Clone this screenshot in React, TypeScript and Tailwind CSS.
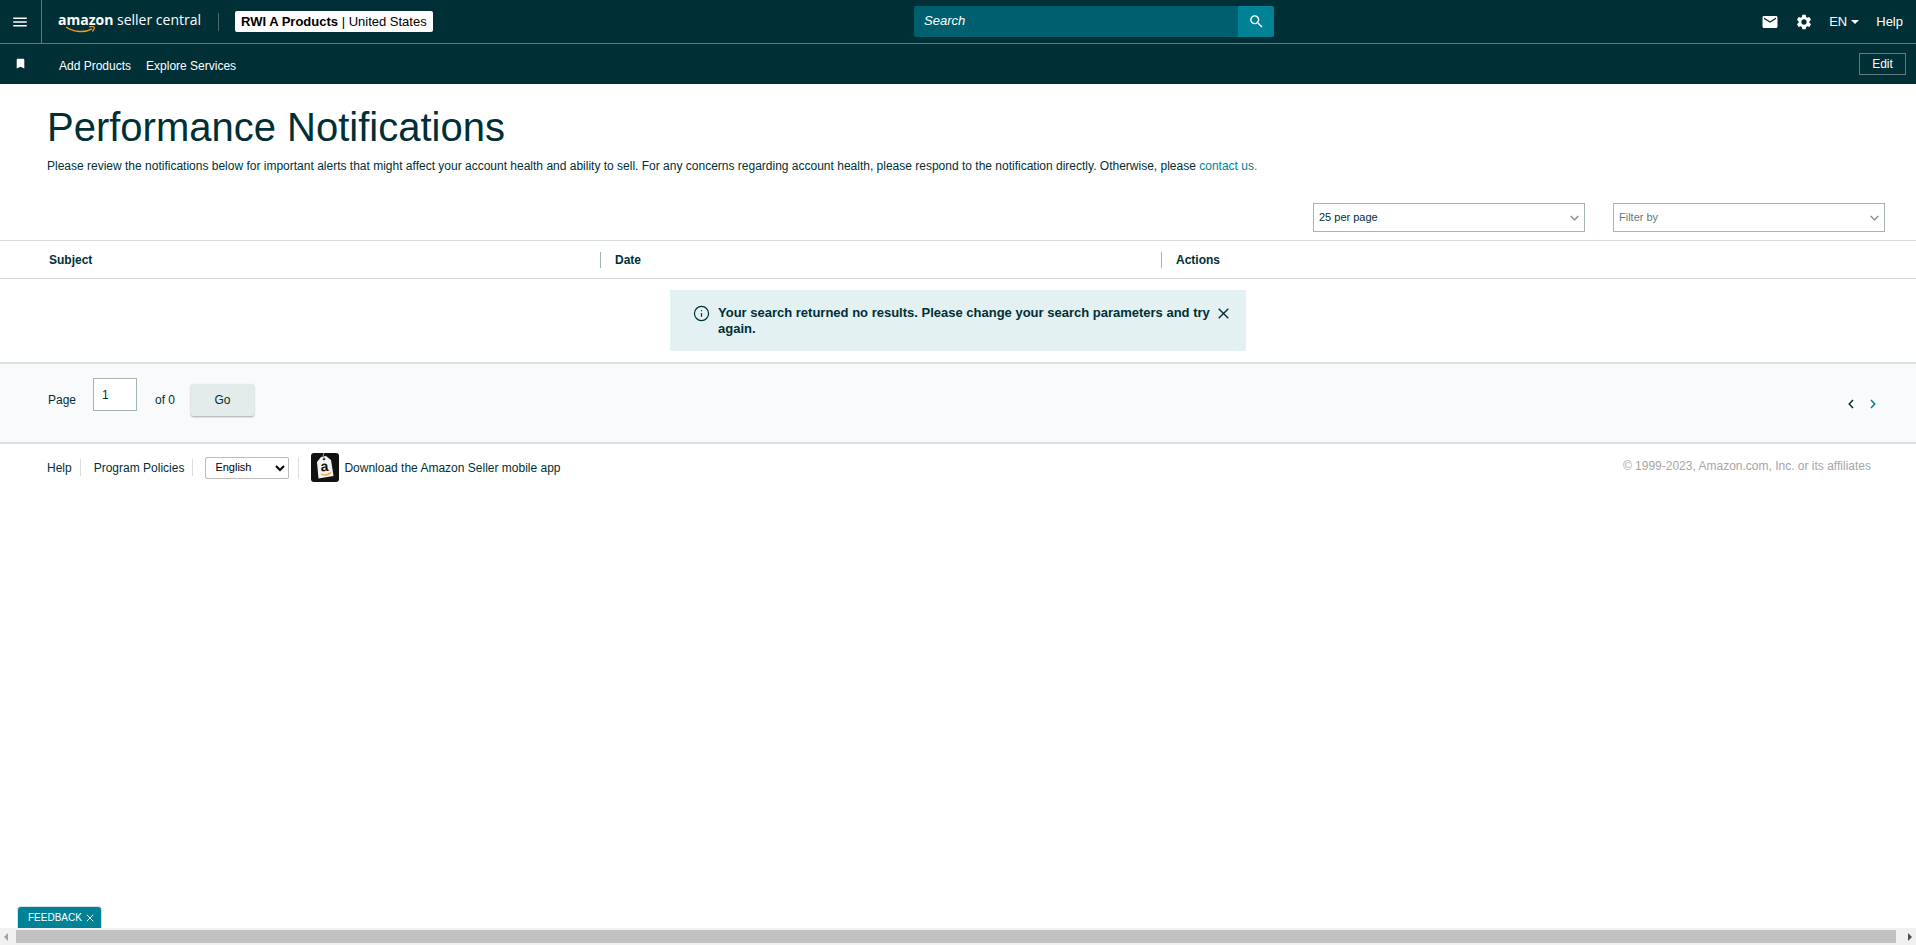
import { Info, X } from "lucide-react";
import { MdBookmark, MdEmail, MdMenu, MdSearch, MdSettings } from "react-icons/md";

function Logo() {
  return (
    <a href="#" className="relative mb-1 ml-4 flex h-6 items-center gap-1 leading-5">
      <span className="w-[55px] font-['Open_Sans',sans-serif] text-[14px] font-bold">amazon</span>
      <span className="w-[84px] font-['Open_Sans',sans-serif] text-[14px] whitespace-nowrap">
        seller central
      </span>
      <svg className="absolute top-[18px] left-2" width="30" height="8" viewBox="0 0 30 8" fill="none">
        <path d="M0 1C8 6.5 19 6.8 26 2.8" stroke="#f79a2b" strokeWidth="1.4" />
        <path d="M23 1c2.5-.7 4.5-.5 5 .1s0 2.6-1.6 4.4" stroke="#f79a2b" strokeWidth="1.2" />
      </svg>
    </a>
  );
}

function TopBar() {
  return (
    <div className="flex h-11 items-center border-b border-[#62787c] text-[13px] text-white">
      <button aria-label="Menu" className="flex h-full w-[42px] items-center justify-center border-r border-[#62787c] pr-0.5">
        <MdMenu size={18} />
      </button>
      <div className="flex flex-1 items-center">
        <Logo />
        <span className="ml-[17px] h-[18px] w-px bg-[#4d6a6f]" />
        <button className="ml-4 h-[21px] rounded-xs bg-white px-1.5 whitespace-nowrap text-black">
          <b>RWI A Products</b> | United States
        </button>
      </div>
      <form className="mb-px flex h-[31px] w-[360px]">
        <input
          aria-label="Search"
          placeholder="Search"
          className="min-w-0 flex-1 rounded-l-xs bg-[#005f6e] px-2.5 italic placeholder:text-white"
        />
        <button type="button" aria-label="Submit search" className="flex w-9 items-center justify-center rounded-r-xs bg-[#008296]">
          <MdSearch size={17} />
        </button>
      </form>
      <div className="flex w-[642px] items-center justify-end pr-[13px]">
        <button aria-label="Mail">
          <MdEmail size={18} />
        </button>
        <button aria-label="Settings" className="ml-4">
          <MdSettings size={18} />
        </button>
        <button className="ml-4 flex items-center gap-1">
          EN
          <span className="mt-px border-x-4 border-t-4 border-x-transparent border-t-white" />
        </button>
        <a href="#" className="ml-[17px]">
          Help
        </a>
      </div>
    </div>
  );
}

function QuickLinks() {
  return (
    <div className="flex h-10 items-center pt-0.5 pr-2.5 pl-3.5 text-xs text-white">
      <button aria-label="Bookmarks" className="mb-1">
        <MdBookmark size={13} />
      </button>
      <nav className="ml-8 flex flex-1 gap-[15px] pt-0.5">
        <a href="#">Add Products</a>
        <a href="#">Explore Services</a>
      </nav>
      <button className="mb-0.5 h-[22px] w-[47px] border border-[#62787c]">Edit</button>
    </div>
  );
}

function Dropdown({ label, muted }: { label: string; muted?: boolean }) {
  return (
    <div className="relative w-[272px]">
      <select
        aria-label={label}
        className={`h-[29px] w-full appearance-none border border-[#a3b4b4] bg-white px-[5px] text-[11px] ${
          muted ? "text-[#6c7778]" : "text-[#002f36]"
        }`}
      >
        <option>{label}</option>
      </select>
      <svg className="pointer-events-none absolute top-3 right-1.5" width="9" height="7" viewBox="0 0 9 7" fill="none">
        <path d="M.7 1l3.8 4L8.3 1" stroke="#879596" strokeWidth="1.5" />
      </svg>
    </div>
  );
}

function Alert() {
  return (
    <div role="status" className="mx-auto flex h-[61px] w-[576px] bg-[#e3f1f2] pt-[15px] pr-[17px] pl-[23px] text-[13px] leading-4 font-bold">
      <Info size={17} strokeWidth={1.7} className="shrink-0" />
      <p className="ml-2 flex-1">
        Your search returned no results. Please change your search parameters and try again.
      </p>
      <button aria-label="Dismiss" className="h-4">
        <svg width="11" height="11" viewBox="0 0 11 11" fill="none">
          <path d="M.7.7l9.6 9.6M10.3.7L.7 10.3" stroke="#002f36" strokeWidth="1.4" />
        </svg>
      </button>
    </div>
  );
}

function Pager() {
  return (
    <div className="flex h-[82px] items-start border-y-2 border-[#dce1e3] bg-[#f9fafc] pr-10 pl-12 text-xs">
      <label htmlFor="page" className="mt-7 w-[45px]">
        Page
      </label>
      <input
        id="page"
        defaultValue="1"
        className="mt-3.5 h-[33px] w-11 border border-[#a3b4b4] bg-white px-2"
      />
      <span className="mt-7 ml-[18px] w-9">of 0</span>
      <button className="mt-5 h-8 w-[63px] rounded-xs bg-[#e3ebeb] shadow-[0_1px_2px_#00000055]">Go</button>
      <div className="mt-[35px] ml-auto flex gap-4">
        <button aria-label="Previous page">
          <svg width="6" height="10" viewBox="0 0 6 10" fill="none">
            <path d="M5 1L1.2 5L5 9" stroke="#002f36" strokeWidth="1.5" />
          </svg>
        </button>
        <button aria-label="Next page">
          <svg width="6" height="10" viewBox="0 0 6 10" fill="none">
            <path d="M1 1l3.8 4L1 9" stroke="#008296" strokeWidth="1.5" />
          </svg>
        </button>
      </div>
    </div>
  );
}

function AppIcon() {
  return (
    <svg width="28" height="29" viewBox="0 0 28 29">
      <rect width="28" height="29" rx="3" fill="#111" />
      <path d="M6 9l4-5 5-1 5 4 2.5 16-15 2.5z" fill="#f3f3f3" />
      <circle cx="13" cy="6" r="1.3" fill="#222" />
      <path d="M13 6C12 3 12 1 13 0" stroke="#aaa" fill="none" />
      <text x="9.5" y="18" fontSize="14" fontWeight="bold" fill="#111" transform="rotate(-6 14 14)">
        a
      </text>
      <path d="M10 21c4 2 7 1.2 10-1.5" stroke="#f79a2b" strokeWidth="1.3" fill="none" />
    </svg>
  );
}

function Footer() {
  return (
    <footer className="flex items-center pt-[9px] pr-[45px] pl-[47px] text-xs">
      <a href="#">Help</a>
      <span className="mx-2 h-[17px] w-px bg-[#dddddd]" />
      <a href="#" className="ml-[5px]">
        Program Policies
      </a>
      <span className="ml-2 h-[17px] w-px bg-[#dddddd]" />
      <div className="relative ml-3">
        <select
          aria-label="Language"
          className="block h-[22px] w-[84px] appearance-none rounded-xs border border-[#bbbbbb] bg-white pl-[9px] text-[11px] text-black"
        >
          <option>English</option>
        </select>
        <svg className="pointer-events-none absolute top-2 right-1" width="10" height="7" viewBox="0 0 10 7" fill="none">
          <path d="M1 1l4 4 4-4" stroke="#000" strokeWidth="2" />
        </svg>
      </div>
      <span className="ml-[9px] h-[22px] w-px bg-[#dddddd]" />
      <a href="#" className="ml-3 flex items-center gap-[5px]">
        <AppIcon />
        Download the Amazon Seller mobile app
      </a>
      <span className="mb-1 ml-auto text-[#a6a6a6]">© 1999-2023, Amazon.com, Inc. or its affiliates</span>
    </footer>
  );
}

function ScrollBar() {
  return (
    <div className="flex h-[17px] items-center bg-[#f1f1f1]">
      <span className="ml-1 border-y-4 border-r-4 border-y-transparent border-r-[#a3a3a3]" />
      <span className="mx-2 h-[13px] flex-1 bg-[#c1c1c1]" />
      <span className="mr-1 ml-1 border-y-4 border-l-4 border-y-transparent border-l-[#505050]" />
    </div>
  );
}

export default function App() {
  return (
    <div className="flex min-h-screen flex-col bg-white font-['Liberation_Sans',Arial,sans-serif] text-[#002f36]">
      <header className="bg-[#002f36]">
        <TopBar />
        <QuickLinks />
      </header>

      <main>
        <div className="px-[47px] pt-5">
          <h1 className="text-[40px] leading-[46px]">Performance Notifications</h1>
          <p className="mt-2 text-xs">
            Please review the notifications below for important alerts that might affect your account health and
            ability to sell. For any concerns regarding account health, please respond to the notification directly.
            Otherwise, please{" "}
            <a href="#" className="text-[#008296]">
              contact us.
            </a>
          </p>
        </div>
        <div className="mt-[29px] mb-2 flex justify-end gap-7 pr-[31px]">
          <Dropdown label="25 per page" />
          <Dropdown label="Filter by" muted />
        </div>
        <table className="w-full table-fixed text-left text-xs">
          <thead>
            <tr className="h-[38px] border-y border-[#d5dbdb]">
              <th className="w-[600px] pl-[49px]">Subject</th>
              <th className="w-[561px]">
                <div className="border-l border-[#a3b4b4] pl-3.5">Date</div>
              </th>
              <th>
                <div className="border-l border-[#a3b4b4] pl-3.5">Actions</div>
              </th>
            </tr>
          </thead>
          <tbody>
            <tr>
              <td colSpan={3} className="pt-[11px] pb-[11px]">
                <Alert />
              </td>
            </tr>
          </tbody>
        </table>
        <Pager />
      </main>

      <Footer />

      <div className="mt-auto">
        <button className="ml-[17px] flex h-[22px] w-[85px] items-center gap-0.5 rounded-t border border-b-0 border-[#cfe3e6] bg-[#008296] pl-2.5 text-[10px] text-white">
          FEEDBACK
          <X size={12} />
        </button>
        <ScrollBar />
      </div>
    </div>
  );
}
